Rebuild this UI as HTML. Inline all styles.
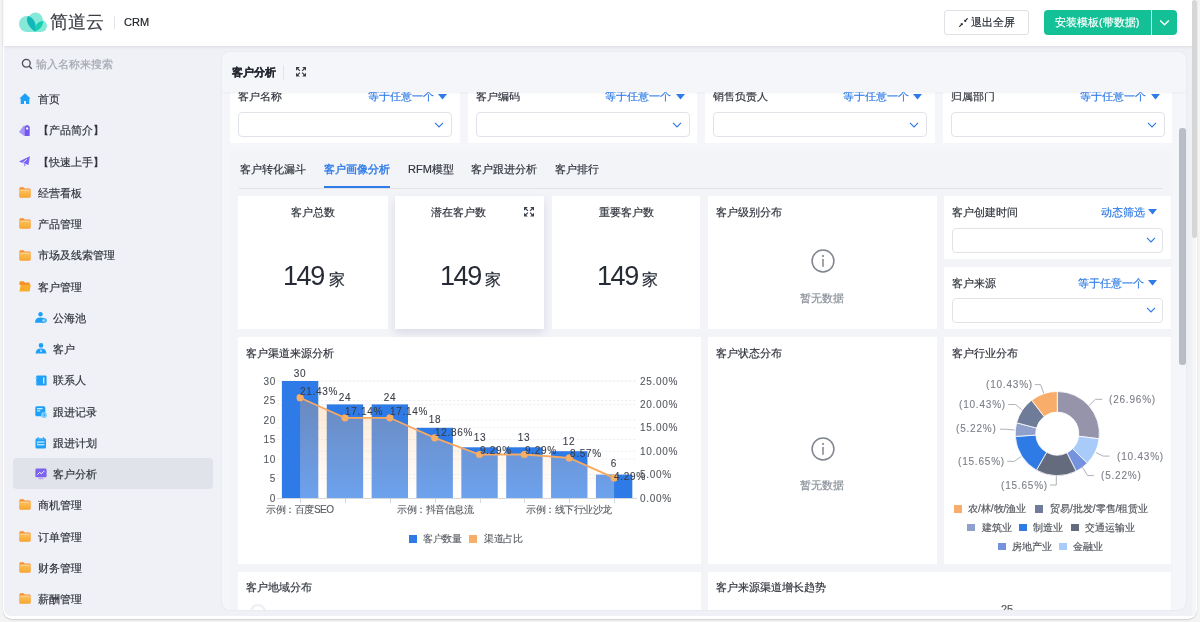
<!DOCTYPE html>
<html><head><meta charset="utf-8">
<style>
*{box-sizing:border-box;margin:0;padding:0}
html,body{width:1200px;height:622px;overflow:hidden;background:#f4f4f4;font-family:"Liberation Sans",sans-serif}
.t{will-change:transform;-webkit-text-stroke:0.18px currentColor}
.a{position:absolute}
.t{position:absolute;font-size:11px;line-height:16px;white-space:nowrap;color:#2f333c}
svg{position:absolute;overflow:visible}
</style></head><body>

<div class="a" style="left:2.5px;top:-10px;width:1194.5px;height:629px;background:#fff;border-radius:9px;box-shadow:0 1px 1.5px rgba(0,0,0,.16)"></div>
<div class="a" style="left:4px;top:30px;width:1188px;height:585.5px;background:#f0f1f6;border-radius:0 0 0 7px"></div>
<div class="a" style="left:4px;top:-5px;width:1188px;height:50.5px;background:#fff;border-radius:0 0 0 0;box-shadow:0 1px 3px rgba(30,40,60,.10)"></div>
<div class="a" style="left:1192px;top:30px;width:4px;height:585.5px;background:#f6f6f9;border-radius:0 0 6px 0"></div>
<div class="a" style="left:1192px;top:0px;width:5px;height:238px;background:#d6d6d6;border-radius:3px"></div>
<svg style="left:16px;top:9px" width="34" height="26" viewBox="0 0 34 26">
  <g fill="#86e8d9"><circle cx="11" cy="15" r="8"/><circle cx="19.5" cy="11" r="7.4"/><circle cx="25" cy="17" r="6"/><rect x="11" y="15" width="14" height="8"/></g>
  <path d="M12,7 C9.3,11.5 11.8,17.5 19,22.6 C20.8,16 19.2,9.5 12,7 Z" fill="#10b8ba"/>
  <path d="M27.2,12 C21.5,12.3 18.3,16.5 19,22.6 C24,20.5 27,17 27.2,12 Z" fill="#14cfb0"/>
</svg>
<div class="t" style="left:49.5px;top:9.0px;font-size:18px;line-height:26px;color:#3a3d44;font-weight:400;">简道云</div>
<div class="a" style="left:114px;top:16px;width:1px;height:13px;background:#e3e4e8"></div>
<div class="t" style="left:124px;top:13.5px;font-size:11px;line-height:16px;color:#20232a;font-weight:400;">CRM</div>
<div class="a" style="left:944px;top:10px;width:85px;height:25px;border:1px solid #dfe1e6;border-radius:3px;background:#fff"></div>
<svg style="left:958.5px;top:17.5px" width="9" height="9" viewBox="0 0 9 9"><path d="M8.3,0.7 L6.2,2.8 M0.7,8.3 L2.8,6.2" stroke="#1f232b" stroke-width="1.2" stroke-linecap="round"/><path d="M5.3,1.5 L5.3,3.8 L7.6,3.8 Z M3.7,5.2 L1.4,5.2 L3.7,7.5 Z" fill="#1f232b"/></svg>
<div class="t" style="left:971px;top:14.3px;font-size:11px;line-height:16px;color:#2b2f38;font-weight:400;">退出全屏</div>
<div class="a" style="left:1044px;top:10px;width:133px;height:25px;background:#14c196;border-radius:4px"></div>
<div class="a" style="left:1151px;top:10px;width:1px;height:25px;background:#c9f2e6"></div>
<div class="t" style="left:1055px;top:14.3px;font-size:11px;line-height:16px;color:#ffffff;font-weight:400;">安装模板(带数据)</div>
<svg style="left:1159px;top:18.5px" width="11" height="8" viewBox="0 0 11 8"><path d="M1.2 1.5 L5.5 5.8 L9.8 1.5" stroke="#fff" stroke-width="1.4" fill="none"/></svg>
<svg style="left:21px;top:58px" width="12" height="12" viewBox="0 0 12 12"><circle cx="5.3" cy="5.3" r="3.9" stroke="#4a4e58" stroke-width="1.3" fill="none"/><path d="M8.2 8.2 L10.8 10.8" stroke="#4a4e58" stroke-width="1.4"/></svg>
<div class="t" style="left:36px;top:55.8px;font-size:11px;line-height:16px;color:#a3a7b0;font-weight:400;">输入名称来搜索</div>
<div class="a" style="left:13px;top:458px;width:200px;height:31px;background:#e1e3ea;border-radius:4px"></div>
<div class="a" style="left:19.4px;top:93.3px"><svg width="12" height="12" viewBox="0 0 12 12"><path d="M6 0.2 L11.6 5.4 L10.3 5.4 L10.3 11 L7 11 L7 8 L5 8 L5 11 L1.7 11 L1.7 5.4 L0.4 5.4 Z" fill="#1ea0f8"/></svg></div>
<div class="t" style="left:38px;top:91.1px;font-size:11px;line-height:16px;color:#30343e;font-weight:400;">首页</div>
<div class="a" style="left:19.4px;top:124.5px"><svg width="12" height="12" viewBox="0 0 12 12"><path d="M5.4,0.6 Q4.8,0.4 4.4,1 L0.3,6.6 Q0,7.1 0.5,7.5 L4.6,10.6 L5.8,10.9 L5.8,1 Z" fill="#a896fb"/><path d="M5.6,2.3 Q5.6,1.7 6.1,1.3 L7.6,0.2 Q8.15,-0.1 8.7,0.2 L10.2,1.3 Q10.7,1.7 10.7,2.3 L10.7,10.3 Q10.7,10.9 10.1,10.9 L6.2,10.9 Q5.6,10.9 5.6,10.3 Z" fill="#7457ee"/><circle cx="8.15" cy="3.5" r="1.15" fill="#fff"/></svg></div>
<div class="t" style="left:38px;top:122.3px;font-size:11px;line-height:16px;color:#30343e;font-weight:400;">【产品简介】</div>
<div class="a" style="left:19.4px;top:155.8px"><svg width="12" height="12" viewBox="0 0 12 12"><path d="M10.9,0.2 L0,5.4 L3.2,6.7 L5.6,7.6 L9.5,9 Z" fill="#7a62f2"/><path d="M4.9,7.2 L5.1,10.7 L7,8.8 Z" fill="#a292f9"/><path d="M3.6,7 L8,3.2" stroke="#f0f1f6" stroke-width="0.9"/></svg></div>
<div class="t" style="left:38px;top:153.6px;font-size:11px;line-height:16px;color:#30343e;font-weight:400;">【快速上手】</div>
<div class="a" style="left:19.4px;top:187.0px"><svg width="12" height="11" viewBox="0 0 12 11"><defs><linearGradient id="fg" x1="0" y1="0" x2="0" y2="1"><stop offset="0" stop-color="#fbc15a"/><stop offset="1" stop-color="#f7a631"/></linearGradient></defs><path d="M0.5 1.2 Q0.5 0.3 1.4 0.3 L4.6 0.3 L5.8 1.6 L10.6 1.6 Q11.5 1.6 11.5 2.5 L11.5 9.6 Q11.5 10.5 10.6 10.5 L1.4 10.5 Q0.5 10.5 0.5 9.6 Z" fill="#f9902a"/><rect x="0.5" y="3.0" width="11" height="7.5" rx="0.9" fill="url(#fg)"/><rect x="1.5" y="2.6" width="9" height="0.8" fill="#fde9c0"/></svg></div>
<div class="t" style="left:38px;top:184.8px;font-size:11px;line-height:16px;color:#30343e;font-weight:400;">经营看板</div>
<div class="a" style="left:19.4px;top:218.3px"><svg width="12" height="11" viewBox="0 0 12 11"><defs><linearGradient id="fg" x1="0" y1="0" x2="0" y2="1"><stop offset="0" stop-color="#fbc15a"/><stop offset="1" stop-color="#f7a631"/></linearGradient></defs><path d="M0.5 1.2 Q0.5 0.3 1.4 0.3 L4.6 0.3 L5.8 1.6 L10.6 1.6 Q11.5 1.6 11.5 2.5 L11.5 9.6 Q11.5 10.5 10.6 10.5 L1.4 10.5 Q0.5 10.5 0.5 9.6 Z" fill="#f9902a"/><rect x="0.5" y="3.0" width="11" height="7.5" rx="0.9" fill="url(#fg)"/><rect x="1.5" y="2.6" width="9" height="0.8" fill="#fde9c0"/></svg></div>
<div class="t" style="left:38px;top:216.1px;font-size:11px;line-height:16px;color:#30343e;font-weight:400;">产品管理</div>
<div class="a" style="left:19.4px;top:249.5px"><svg width="12" height="11" viewBox="0 0 12 11"><defs><linearGradient id="fg" x1="0" y1="0" x2="0" y2="1"><stop offset="0" stop-color="#fbc15a"/><stop offset="1" stop-color="#f7a631"/></linearGradient></defs><path d="M0.5 1.2 Q0.5 0.3 1.4 0.3 L4.6 0.3 L5.8 1.6 L10.6 1.6 Q11.5 1.6 11.5 2.5 L11.5 9.6 Q11.5 10.5 10.6 10.5 L1.4 10.5 Q0.5 10.5 0.5 9.6 Z" fill="#f9902a"/><rect x="0.5" y="3.0" width="11" height="7.5" rx="0.9" fill="url(#fg)"/><rect x="1.5" y="2.6" width="9" height="0.8" fill="#fde9c0"/></svg></div>
<div class="t" style="left:38px;top:247.3px;font-size:11px;line-height:16px;color:#30343e;font-weight:400;">市场及线索管理</div>
<div class="a" style="left:19.4px;top:280.7px"><svg width="12" height="11" viewBox="0 0 12 11"><path d="M0.5 1.2 Q0.5 0.3 1.4 0.3 L4.6 0.3 L5.8 1.6 L10 1.6 Q10.8 1.6 10.8 2.5 L10.8 4 L0.5 4 Z" fill="#f9902a"/><path d="M1.6 4 L11.8 4 L10.6 10.4 L0.4 10.4 Z" fill="#f8ad2d"/></svg></div>
<div class="t" style="left:38px;top:278.5px;font-size:11px;line-height:16px;color:#30343e;font-weight:400;">客户管理</div>
<div class="a" style="left:35px;top:312.0px"><svg width="12" height="11" viewBox="0 0 12 11"><circle cx="5.5" cy="2.3" r="2.2" fill="#1ea0f8"/><path d="M0 10.8 Q0 5.6 5.5 5.6 Q7.5 5.6 8.6 6.3 L8.6 10.8 Z" fill="#1ea0f8"/><rect x="5.5" y="6.2" width="6.3" height="4.6" rx="2.3" fill="#1ea0f8"/><rect x="7" y="7.2" width="3.6" height="2.6" rx="1.2" fill="#8fd3ff"/></svg></div>
<div class="t" style="left:53px;top:309.8px;font-size:11px;line-height:16px;color:#30343e;font-weight:400;">公海池</div>
<div class="a" style="left:35px;top:343.2px"><svg width="12" height="11" viewBox="0 0 12 11"><circle cx="6" cy="2.4" r="2.3" fill="#1ea0f8"/><path d="M0.6 10.6 Q0.6 5.4 6 5.4 Q11.4 5.4 11.4 10.6 Z" fill="#1ea0f8"/><path d="M6 6 L6.8 8.2 L6 9 L5.2 8.2 Z" fill="#fff"/></svg></div>
<div class="t" style="left:53px;top:341.0px;font-size:11px;line-height:16px;color:#30343e;font-weight:400;">客户</div>
<div class="a" style="left:35px;top:374.5px"><svg width="12" height="11" viewBox="0 0 12 11"><rect x="1.2" y="0.4" width="10.4" height="10.2" rx="1.3" fill="#1ea0f8"/><rect x="0.2" y="2.6" width="2" height="1" fill="#8fd3ff"/><rect x="0.2" y="7.2" width="2" height="1" fill="#8fd3ff"/><rect x="8.2" y="2.4" width="1.1" height="6.2" fill="#fff"/></svg></div>
<div class="t" style="left:53px;top:372.3px;font-size:11px;line-height:16px;color:#30343e;font-weight:400;">联系人</div>
<div class="a" style="left:35px;top:405.7px"><svg width="12" height="12" viewBox="0 0 12 12"><rect x="0.3" y="0.3" width="10" height="10" rx="1.5" fill="#1ea0f8"/><rect x="2" y="2.2" width="5.5" height="1" fill="#fff"/><rect x="2" y="4.4" width="3.2" height="1" fill="#fff"/><circle cx="9" cy="9" r="2.9" fill="#7fccff"/><path d="M9 7.5 L9 9.2 L10.2 10" stroke="#1ea0f8" stroke-width="0.8" fill="none"/></svg></div>
<div class="t" style="left:53px;top:403.5px;font-size:11px;line-height:16px;color:#30343e;font-weight:400;">跟进记录</div>
<div class="a" style="left:35px;top:436.9px"><svg width="12" height="12" viewBox="0 0 12 12"><rect x="0.5" y="1.2" width="10.5" height="10.3" rx="1.5" fill="#1ea0f8"/><rect x="2.6" y="0" width="1.1" height="2.6" rx="0.5" fill="#1ea0f8"/><rect x="7.8" y="0" width="1.1" height="2.6" rx="0.5" fill="#1ea0f8"/><rect x="2.2" y="1.7" width="7.1" height="0.6" fill="#8fd3ff"/><rect x="2" y="4.5" width="7.5" height="1" fill="#fff"/><rect x="2" y="7.3" width="7.5" height="1" fill="#fff"/><rect x="2" y="4.5" width="1.3" height="3.8" fill="#8fd3ff"/></svg></div>
<div class="t" style="left:53px;top:434.7px;font-size:11px;line-height:16px;color:#30343e;font-weight:400;">跟进计划</div>
<div class="a" style="left:35px;top:468.2px"><svg width="12" height="12" viewBox="0 0 12 12"><rect x="0.4" y="0.6" width="11.2" height="8.6" rx="1.3" fill="#7b62ef"/><rect x="3.6" y="9.6" width="4.8" height="1.6" fill="#b9a6fb"/><path d="M2.4 6.6 L4.6 4.4 L6.4 5.8 L9.4 2.8" stroke="#fff" stroke-width="1" fill="none"/></svg></div>
<div class="t" style="left:53px;top:466.0px;font-size:11px;line-height:16px;color:#30343e;font-weight:400;">客户分析</div>
<div class="a" style="left:19.4px;top:499.4px"><svg width="12" height="11" viewBox="0 0 12 11"><defs><linearGradient id="fg" x1="0" y1="0" x2="0" y2="1"><stop offset="0" stop-color="#fbc15a"/><stop offset="1" stop-color="#f7a631"/></linearGradient></defs><path d="M0.5 1.2 Q0.5 0.3 1.4 0.3 L4.6 0.3 L5.8 1.6 L10.6 1.6 Q11.5 1.6 11.5 2.5 L11.5 9.6 Q11.5 10.5 10.6 10.5 L1.4 10.5 Q0.5 10.5 0.5 9.6 Z" fill="#f9902a"/><rect x="0.5" y="3.0" width="11" height="7.5" rx="0.9" fill="url(#fg)"/><rect x="1.5" y="2.6" width="9" height="0.8" fill="#fde9c0"/></svg></div>
<div class="t" style="left:38px;top:497.2px;font-size:11px;line-height:16px;color:#30343e;font-weight:400;">商机管理</div>
<div class="a" style="left:19.4px;top:530.7px"><svg width="12" height="11" viewBox="0 0 12 11"><defs><linearGradient id="fg" x1="0" y1="0" x2="0" y2="1"><stop offset="0" stop-color="#fbc15a"/><stop offset="1" stop-color="#f7a631"/></linearGradient></defs><path d="M0.5 1.2 Q0.5 0.3 1.4 0.3 L4.6 0.3 L5.8 1.6 L10.6 1.6 Q11.5 1.6 11.5 2.5 L11.5 9.6 Q11.5 10.5 10.6 10.5 L1.4 10.5 Q0.5 10.5 0.5 9.6 Z" fill="#f9902a"/><rect x="0.5" y="3.0" width="11" height="7.5" rx="0.9" fill="url(#fg)"/><rect x="1.5" y="2.6" width="9" height="0.8" fill="#fde9c0"/></svg></div>
<div class="t" style="left:38px;top:528.5px;font-size:11px;line-height:16px;color:#30343e;font-weight:400;">订单管理</div>
<div class="a" style="left:19.4px;top:561.9px"><svg width="12" height="11" viewBox="0 0 12 11"><defs><linearGradient id="fg" x1="0" y1="0" x2="0" y2="1"><stop offset="0" stop-color="#fbc15a"/><stop offset="1" stop-color="#f7a631"/></linearGradient></defs><path d="M0.5 1.2 Q0.5 0.3 1.4 0.3 L4.6 0.3 L5.8 1.6 L10.6 1.6 Q11.5 1.6 11.5 2.5 L11.5 9.6 Q11.5 10.5 10.6 10.5 L1.4 10.5 Q0.5 10.5 0.5 9.6 Z" fill="#f9902a"/><rect x="0.5" y="3.0" width="11" height="7.5" rx="0.9" fill="url(#fg)"/><rect x="1.5" y="2.6" width="9" height="0.8" fill="#fde9c0"/></svg></div>
<div class="t" style="left:38px;top:559.7px;font-size:11px;line-height:16px;color:#30343e;font-weight:400;">财务管理</div>
<div class="a" style="left:19.4px;top:593.1px"><svg width="12" height="11" viewBox="0 0 12 11"><defs><linearGradient id="fg" x1="0" y1="0" x2="0" y2="1"><stop offset="0" stop-color="#fbc15a"/><stop offset="1" stop-color="#f7a631"/></linearGradient></defs><path d="M0.5 1.2 Q0.5 0.3 1.4 0.3 L4.6 0.3 L5.8 1.6 L10.6 1.6 Q11.5 1.6 11.5 2.5 L11.5 9.6 Q11.5 10.5 10.6 10.5 L1.4 10.5 Q0.5 10.5 0.5 9.6 Z" fill="#f9902a"/><rect x="0.5" y="3.0" width="11" height="7.5" rx="0.9" fill="url(#fg)"/><rect x="1.5" y="2.6" width="9" height="0.8" fill="#fde9c0"/></svg></div>
<div class="t" style="left:38px;top:590.9px;font-size:11px;line-height:16px;color:#30343e;font-weight:400;">薪酬管理</div>
<div class="a" style="left:222px;top:52px;width:964px;height:558px;background:#f5f6fa;border-radius:8px;box-shadow:0 0 2px rgba(40,50,80,.10)"></div>
<div id="pnl" class="a" style="left:222px;top:52px;width:964px;height:558px;border-radius:8px;overflow:hidden">
<div class="a" style="left:8px;top:99px;width:942px;height:600px;background:#f3f4f8"></div>
<div class="a" style="left:8px;top:28px;width:229.5px;height:63px;background:#fff;"></div>
<div class="a" style="left:245.5px;top:28px;width:229.5px;height:63px;background:#fff;"></div>
<div class="a" style="left:483px;top:28px;width:229.5px;height:63px;background:#fff;"></div>
<div class="a" style="left:720.5px;top:28px;width:229.5px;height:63px;background:#fff;"></div>
<div class="t" style="left:16px;top:36.1px;font-size:11px;line-height:16px;color:#2f333c;font-weight:400;">客户名称</div>
<div class="t" style="left:145.5px;top:36.1px;font-size:11px;line-height:16px;color:#2f7be8;font-weight:400;">等于任意一个</div>
<svg style="left:216px;top:42px" width="9" height="6" viewBox="0 0 9 6"><path d="M0 0 L9 0 L4.5 5.5 Z" fill="#2f7be8"/></svg>
<div class="a" style="left:16px;top:60px;width:214px;height:25px;border:1px solid #e1e3e8;border-radius:4px"></div>
<svg style="left:212px;top:70px" width="10" height="6" viewBox="0 0 10 6"><path d="M1 0.8 L5 4.8 L9 0.8" stroke="#2f7be8" stroke-width="1.2" fill="none"/></svg>
<div class="t" style="left:253.5px;top:36.1px;font-size:11px;line-height:16px;color:#2f333c;font-weight:400;">客户编码</div>
<div class="t" style="left:383.0px;top:36.1px;font-size:11px;line-height:16px;color:#2f7be8;font-weight:400;">等于任意一个</div>
<svg style="left:453.5px;top:42px" width="9" height="6" viewBox="0 0 9 6"><path d="M0 0 L9 0 L4.5 5.5 Z" fill="#2f7be8"/></svg>
<div class="a" style="left:253.5px;top:60px;width:214px;height:25px;border:1px solid #e1e3e8;border-radius:4px"></div>
<svg style="left:449.5px;top:70px" width="10" height="6" viewBox="0 0 10 6"><path d="M1 0.8 L5 4.8 L9 0.8" stroke="#2f7be8" stroke-width="1.2" fill="none"/></svg>
<div class="t" style="left:491px;top:36.1px;font-size:11px;line-height:16px;color:#2f333c;font-weight:400;">销售负责人</div>
<div class="t" style="left:620.5px;top:36.1px;font-size:11px;line-height:16px;color:#2f7be8;font-weight:400;">等于任意一个</div>
<svg style="left:691px;top:42px" width="9" height="6" viewBox="0 0 9 6"><path d="M0 0 L9 0 L4.5 5.5 Z" fill="#2f7be8"/></svg>
<div class="a" style="left:491px;top:60px;width:214px;height:25px;border:1px solid #e1e3e8;border-radius:4px"></div>
<svg style="left:687px;top:70px" width="10" height="6" viewBox="0 0 10 6"><path d="M1 0.8 L5 4.8 L9 0.8" stroke="#2f7be8" stroke-width="1.2" fill="none"/></svg>
<div class="t" style="left:728.5px;top:36.1px;font-size:11px;line-height:16px;color:#2f333c;font-weight:400;">归属部门</div>
<div class="t" style="left:858.0px;top:36.1px;font-size:11px;line-height:16px;color:#2f7be8;font-weight:400;">等于任意一个</div>
<svg style="left:928.5px;top:42px" width="9" height="6" viewBox="0 0 9 6"><path d="M0 0 L9 0 L4.5 5.5 Z" fill="#2f7be8"/></svg>
<div class="a" style="left:728.5px;top:60px;width:214px;height:25px;border:1px solid #e1e3e8;border-radius:4px"></div>
<svg style="left:924.5px;top:70px" width="10" height="6" viewBox="0 0 10 6"><path d="M1 0.8 L5 4.8 L9 0.8" stroke="#2f7be8" stroke-width="1.2" fill="none"/></svg>
<div class="a" style="left:0;top:0;width:964px;height:40px;background:#f5f6fa;box-shadow:0 1px 2px rgba(200,205,220,.25)"></div>
<div class="t" style="left:10px;top:12.1px;font-size:11px;line-height:16px;color:#22262f;font-weight:700;">客户分析</div>
<div class="a" style="left:60.5px;top:12.5px;width:1px;height:15px;background:#e2e4ea"></div>
<div class="a" style="left:74.10000000000002px;top:14.5px"><svg width="10" height="9.5" viewBox="0 0 10 9.5"><g fill="#3a3f4a"><path d="M0,0 L3.8,0 L0,3.8 Z M10,0 L6.2,0 L10,3.8 Z M0,9.5 L3.8,9.5 L0,5.7 Z M10,9.5 L6.2,9.5 L10,5.7 Z"/></g><g stroke="#3a3f4a" stroke-width="1.1"><path d="M1.5,1.5 L3.9,3.9 M8.5,1.5 L6.1,3.9 M1.5,8 L3.9,5.6 M8.5,8 L6.1,5.6"/></g></svg></div>
<div class="t" style="left:18px;top:109.4px;font-size:11px;line-height:16px;color:#2f333c;font-weight:400;">客户转化漏斗</div>
<div class="t" style="left:102px;top:109.4px;font-size:11px;line-height:16px;color:#2f7be8;font-weight:400;-webkit-text-stroke:0.4px currentColor">客户画像分析</div>
<div class="t" style="left:186px;top:109.4px;font-size:11px;line-height:16px;color:#2f333c;font-weight:400;">RFM模型</div>
<div class="t" style="left:249px;top:109.4px;font-size:11px;line-height:16px;color:#2f333c;font-weight:400;">客户跟进分析</div>
<div class="t" style="left:333px;top:109.4px;font-size:11px;line-height:16px;color:#2f333c;font-weight:400;">客户排行</div>
<div class="a" style="left:17px;top:136px;width:924px;height:1px;background:#e1e3e9"></div>
<div class="a" style="left:102px;top:134px;width:66px;height:2px;background:#2f7be8"></div>
<div class="a" style="left:16px;top:144px;width:149.5px;height:133px;background:#fff;"></div>
<div class="t" style="left:16px;width:149.5px;text-align:center;top:151.8px;color:#2f333c">客户总数</div>
<div class="t" style="left:61.2px;top:209px;line-height:30px;font-size:27px;letter-spacing:-1.4px;color:#262b36;-webkit-text-stroke:0">149</div>
<div class="t" style="left:106.6px;top:218px;line-height:20px;font-size:16px;color:#262b36">家</div>
<div class="a" style="left:173px;top:144px;width:149px;height:133px;background:#fff;box-shadow:0 4px 9px rgba(60,50,120,.13);"></div>
<div class="t" style="left:173px;width:127px;text-align:center;top:151.8px;color:#2f333c">潜在客户数</div>
<div class="t" style="left:218.0px;top:209px;line-height:30px;font-size:27px;letter-spacing:-1.4px;color:#262b36;-webkit-text-stroke:0">149</div>
<div class="t" style="left:263.3px;top:218px;line-height:20px;font-size:16px;color:#262b36">家</div>
<div class="a" style="left:330px;top:144px;width:148px;height:133px;background:#fff;"></div>
<div class="t" style="left:330px;width:148px;text-align:center;top:151.8px;color:#2f333c">重要客户数</div>
<div class="t" style="left:374.5px;top:209px;line-height:30px;font-size:27px;letter-spacing:-1.4px;color:#262b36;-webkit-text-stroke:0">149</div>
<div class="t" style="left:419.8px;top:218px;line-height:20px;font-size:16px;color:#262b36">家</div>
<div class="a" style="left:301.79999999999995px;top:154.8px"><svg width="10" height="9.5" viewBox="0 0 10 9.5"><g fill="#3a3f4a"><path d="M0,0 L3.8,0 L0,3.8 Z M10,0 L6.2,0 L10,3.8 Z M0,9.5 L3.8,9.5 L0,5.7 Z M10,9.5 L6.2,9.5 L10,5.7 Z"/></g><g stroke="#3a3f4a" stroke-width="1.1"><path d="M1.5,1.5 L3.9,3.9 M8.5,1.5 L6.1,3.9 M1.5,8 L3.9,5.6 M8.5,8 L6.1,5.6"/></g></svg></div>
<div class="a" style="left:486px;top:144px;width:228.5px;height:133px;background:#fff;"></div>
<div class="t" style="left:494px;top:151.8px;font-size:11px;line-height:16px;color:#2f333c;font-weight:400;">客户级别分布</div>
<div class="a" style="left:588.5px;top:197px"><svg width="24" height="24" viewBox="0 0 24 24"><circle cx="12" cy="12" r="10.9" stroke="#80848e" stroke-width="1.5" fill="none"/><circle cx="12" cy="7" r="1.1" fill="#80848e"/><rect x="11.25" y="9.8" width="1.5" height="8.2" rx="0.7" fill="#80848e"/></svg></div>
<div class="t" style="left:486px;width:228px;text-align:center;top:237.8px;color:#8a8f99">暂无数据</div>
<div class="a" style="left:721.5px;top:144px;width:227.5px;height:63px;background:#fff;"></div>
<div class="t" style="left:730px;top:151.8px;font-size:11px;line-height:16px;color:#2f333c;font-weight:400;">客户创建时间</div>
<div class="t" style="left:879px;top:151.8px;font-size:11px;line-height:16px;color:#2f7be8;font-weight:400;">动态筛选</div>
<svg style="left:926px;top:157px" width="9" height="6" viewBox="0 0 9 6"><path d="M0 0 L9 0 L4.5 5.5 Z" fill="#2f7be8"/></svg>
<div class="a" style="left:730px;top:175.5px;width:211px;height:25px;border:1px solid #e1e3e8;border-radius:4px"></div>
<svg style="left:923.7px;top:185.2px" width="10" height="6" viewBox="0 0 10 6"><path d="M1 0.8 L5 4.8 L9 0.8" stroke="#2f7be8" stroke-width="1.2" fill="none"/></svg>
<div class="a" style="left:721.5px;top:215px;width:227.5px;height:62px;background:#fff;"></div>
<div class="t" style="left:730px;top:222.8px;font-size:11px;line-height:16px;color:#2f333c;font-weight:400;">客户来源</div>
<div class="t" style="left:856px;top:222.8px;font-size:11px;line-height:16px;color:#2f7be8;font-weight:400;">等于任意一个</div>
<svg style="left:926px;top:228px" width="9" height="6" viewBox="0 0 9 6"><path d="M0 0 L9 0 L4.5 5.5 Z" fill="#2f7be8"/></svg>
<div class="a" style="left:730px;top:245.5px;width:211px;height:25px;border:1px solid #e1e3e8;border-radius:4px"></div>
<svg style="left:923.7px;top:255.2px" width="10" height="6" viewBox="0 0 10 6"><path d="M1 0.8 L5 4.8 L9 0.8" stroke="#2f7be8" stroke-width="1.2" fill="none"/></svg>
<div class="a" style="left:16px;top:285px;width:463px;height:226.5px;background:#fff;"></div>
<div class="t" style="left:24px;top:292.8px;font-size:11px;line-height:16px;color:#2f333c;font-weight:400;">客户渠道来源分析</div>
<div class="a" style="left:486px;top:285px;width:228.5px;height:226.5px;background:#fff;"></div>
<div class="t" style="left:494px;top:292.8px;font-size:11px;line-height:16px;color:#2f333c;font-weight:400;">客户状态分布</div>
<div class="a" style="left:588.5px;top:385px"><svg width="24" height="24" viewBox="0 0 24 24"><circle cx="12" cy="12" r="10.9" stroke="#80848e" stroke-width="1.5" fill="none"/><circle cx="12" cy="7" r="1.1" fill="#80848e"/><rect x="11.25" y="9.8" width="1.5" height="8.2" rx="0.7" fill="#80848e"/></svg></div>
<div class="t" style="left:486px;width:228px;text-align:center;top:425.3px;color:#8a8f99">暂无数据</div>
<div class="a" style="left:721.5px;top:285px;width:227.5px;height:226.5px;background:#fff;"></div>
<div class="t" style="left:730px;top:292.8px;font-size:11px;line-height:16px;color:#2f333c;font-weight:400;">客户行业分布</div>
<div class="a" style="left:16px;top:519.5px;width:463px;height:48.5px;background:#fff;"></div>
<div class="t" style="left:24px;top:527.3px;font-size:11px;line-height:16px;color:#2f333c;font-weight:400;">客户地域分布</div>
<div class="a" style="left:486px;top:519.5px;width:463px;height:48.5px;background:#fff;"></div>
<div class="t" style="left:494px;top:527.3px;font-size:11px;line-height:16px;color:#2f333c;font-weight:400;">客户来源渠道增长趋势</div>
<div class="t" style="left:779px;top:549.3px;font-size:11px;line-height:16px;color:#55595f;font-weight:400;">25</div>
<svg style="left:27px;top:551px" width="20" height="10" viewBox="0 0 20 10"><path d="M2,9 A7,7 0 0 1 16,9" stroke="#edf0f5" stroke-width="2.5" fill="none"/></svg>
</div>
<svg style="left:0;top:0" width="1200" height="622" viewBox="0 0 1200 622">
<defs><linearGradient id="ag" x1="0" y1="0" x2="0" y2="1"><stop offset="0" stop-color="rgb(247,172,98)" stop-opacity="0.3"/><stop offset="1" stop-color="rgb(255,255,255)" stop-opacity="0.3"/></linearGradient></defs>
<line x1="277" y1="478.5" x2="637" y2="478.5" stroke="#eef0f3" stroke-width="1" stroke-dasharray="2.5,1.5"/>
<line x1="277" y1="459.0" x2="637" y2="459.0" stroke="#eef0f3" stroke-width="1" stroke-dasharray="2.5,1.5"/>
<line x1="277" y1="439.5" x2="637" y2="439.5" stroke="#eef0f3" stroke-width="1" stroke-dasharray="2.5,1.5"/>
<line x1="277" y1="420.0" x2="637" y2="420.0" stroke="#eef0f3" stroke-width="1" stroke-dasharray="2.5,1.5"/>
<line x1="277" y1="400.5" x2="637" y2="400.5" stroke="#eef0f3" stroke-width="1" stroke-dasharray="2.5,1.5"/>
<line x1="277" y1="381.0" x2="637" y2="381.0" stroke="#eef0f3" stroke-width="1" stroke-dasharray="2.5,1.5"/>
<line x1="277" y1="474.6" x2="637" y2="474.6" stroke="#eef0f3" stroke-width="1" stroke-dasharray="2.5,1.5"/>
<line x1="277" y1="451.2" x2="637" y2="451.2" stroke="#eef0f3" stroke-width="1" stroke-dasharray="2.5,1.5"/>
<line x1="277" y1="427.8" x2="637" y2="427.8" stroke="#eef0f3" stroke-width="1" stroke-dasharray="2.5,1.5"/>
<line x1="277" y1="404.4" x2="637" y2="404.4" stroke="#eef0f3" stroke-width="1" stroke-dasharray="2.5,1.5"/>
<line x1="277" y1="381.0" x2="637" y2="381.0" stroke="#eef0f3" stroke-width="1" stroke-dasharray="2.5,1.5"/>
<rect x="281.90" y="381.00" width="36.4" height="117.00" fill="#2e7ae6"/>
<rect x="326.76" y="404.40" width="36.4" height="93.60" fill="#2e7ae6"/>
<rect x="371.62" y="404.40" width="36.4" height="93.60" fill="#2e7ae6"/>
<rect x="416.48" y="427.80" width="36.4" height="70.20" fill="#2e7ae6"/>
<rect x="461.34" y="447.30" width="36.4" height="50.70" fill="#2e7ae6"/>
<rect x="506.20" y="447.30" width="36.4" height="50.70" fill="#2e7ae6"/>
<rect x="551.06" y="451.20" width="36.4" height="46.80" fill="#2e7ae6"/>
<rect x="595.92" y="474.60" width="36.4" height="23.40" fill="#2e7ae6"/>
<polygon points="300.10,498 300.10,397.71 344.96,417.78 389.82,417.78 434.68,437.82 479.54,454.52 524.40,454.52 569.26,457.89 614.12,477.92 614.12,498" fill="url(#ag)"/>
<polyline points="300.10,397.71 344.96,417.78 389.82,417.78 434.68,437.82 479.54,454.52 524.40,454.52 569.26,457.89 614.12,477.92" fill="none" stroke="#f5a962" stroke-width="1.8"/>
<line x1="277" y1="498.5" x2="637" y2="498.5" stroke="#d5d8de" stroke-width="1"/>
<line x1="300.5" y1="498" x2="300.5" y2="503" stroke="#d5d8de" stroke-width="1"/>
<line x1="345.5" y1="498" x2="345.5" y2="503" stroke="#d5d8de" stroke-width="1"/>
<line x1="390.5" y1="498" x2="390.5" y2="503" stroke="#d5d8de" stroke-width="1"/>
<line x1="435.5" y1="498" x2="435.5" y2="503" stroke="#d5d8de" stroke-width="1"/>
<line x1="480.5" y1="498" x2="480.5" y2="503" stroke="#d5d8de" stroke-width="1"/>
<line x1="524.5" y1="498" x2="524.5" y2="503" stroke="#d5d8de" stroke-width="1"/>
<line x1="569.5" y1="498" x2="569.5" y2="503" stroke="#d5d8de" stroke-width="1"/>
<line x1="614.5" y1="498" x2="614.5" y2="503" stroke="#d5d8de" stroke-width="1"/>
<circle cx="300.10" cy="397.71" r="3.6" fill="#f7ae66"/>
<circle cx="344.96" cy="417.78" r="3.6" fill="#f7ae66"/>
<circle cx="389.82" cy="417.78" r="3.6" fill="#f7ae66"/>
<circle cx="434.68" cy="437.82" r="3.6" fill="#f7ae66"/>
<circle cx="479.54" cy="454.52" r="3.6" fill="#f7ae66"/>
<circle cx="524.40" cy="454.52" r="3.6" fill="#f7ae66"/>
<circle cx="569.26" cy="457.89" r="3.6" fill="#f7ae66"/>
<circle cx="614.12" cy="477.92" r="3.6" fill="#f7ae66"/>
</svg>
<div class="t" style="left:245.5px;width:30px;text-align:right;top:490.5px;color:#55595f;font-size:10px;letter-spacing:0.7px;-webkit-text-stroke:0.1px currentColor">0</div>
<div class="t" style="left:245.5px;width:30px;text-align:right;top:471.0px;color:#55595f;font-size:10px;letter-spacing:0.7px;-webkit-text-stroke:0.1px currentColor">5</div>
<div class="t" style="left:245.5px;width:30px;text-align:right;top:451.5px;color:#55595f;font-size:10px;letter-spacing:0.7px;-webkit-text-stroke:0.1px currentColor">10</div>
<div class="t" style="left:245.5px;width:30px;text-align:right;top:432.0px;color:#55595f;font-size:10px;letter-spacing:0.7px;-webkit-text-stroke:0.1px currentColor">15</div>
<div class="t" style="left:245.5px;width:30px;text-align:right;top:412.5px;color:#55595f;font-size:10px;letter-spacing:0.7px;-webkit-text-stroke:0.1px currentColor">20</div>
<div class="t" style="left:245.5px;width:30px;text-align:right;top:393.0px;color:#55595f;font-size:10px;letter-spacing:0.7px;-webkit-text-stroke:0.1px currentColor">25</div>
<div class="t" style="left:245.5px;width:30px;text-align:right;top:373.5px;color:#55595f;font-size:10px;letter-spacing:0.7px;-webkit-text-stroke:0.1px currentColor">30</div>
<div class="t" style="left:640.0px;top:490.5px;color:#55595f;font-size:10px;letter-spacing:0.7px;-webkit-text-stroke:0.1px currentColor">0.00%</div>
<div class="t" style="left:640.0px;top:467.1px;color:#55595f;font-size:10px;letter-spacing:0.7px;-webkit-text-stroke:0.1px currentColor">5.00%</div>
<div class="t" style="left:640.0px;top:443.7px;color:#55595f;font-size:10px;letter-spacing:0.7px;-webkit-text-stroke:0.1px currentColor">10.00%</div>
<div class="t" style="left:640.0px;top:420.3px;color:#55595f;font-size:10px;letter-spacing:0.7px;-webkit-text-stroke:0.1px currentColor">15.00%</div>
<div class="t" style="left:640.0px;top:396.9px;color:#55595f;font-size:10px;letter-spacing:0.7px;-webkit-text-stroke:0.1px currentColor">20.00%</div>
<div class="t" style="left:640.0px;top:373.5px;color:#55595f;font-size:10px;letter-spacing:0.7px;-webkit-text-stroke:0.1px currentColor">25.00%</div>
<div class="t" style="left:285.1px;width:30px;text-align:center;top:366.1px;color:#3a3e46;font-size:10px;letter-spacing:0.7px;-webkit-text-stroke:0.1px currentColor">30</div>
<div class="t" style="left:330.0px;width:30px;text-align:center;top:389.6px;color:#3a3e46;font-size:10px;letter-spacing:0.7px;-webkit-text-stroke:0.1px currentColor">24</div>
<div class="t" style="left:374.8px;width:30px;text-align:center;top:389.6px;color:#3a3e46;font-size:10px;letter-spacing:0.7px;-webkit-text-stroke:0.1px currentColor">24</div>
<div class="t" style="left:419.7px;width:30px;text-align:center;top:411.9px;color:#3a3e46;font-size:10px;letter-spacing:0.7px;-webkit-text-stroke:0.1px currentColor">18</div>
<div class="t" style="left:464.5px;width:30px;text-align:center;top:430.3px;color:#3a3e46;font-size:10px;letter-spacing:0.7px;-webkit-text-stroke:0.1px currentColor">13</div>
<div class="t" style="left:509.4px;width:30px;text-align:center;top:430.1px;color:#3a3e46;font-size:10px;letter-spacing:0.7px;-webkit-text-stroke:0.1px currentColor">13</div>
<div class="t" style="left:554.3px;width:30px;text-align:center;top:434.0px;color:#3a3e46;font-size:10px;letter-spacing:0.7px;-webkit-text-stroke:0.1px currentColor">12</div>
<div class="t" style="left:599.1px;width:30px;text-align:center;top:455.8px;color:#3a3e46;font-size:10px;letter-spacing:0.7px;-webkit-text-stroke:0.1px currentColor">6</div>
<div class="t" style="left:300.4px;top:384.0px;color:#3a3e46;font-size:10px;letter-spacing:0.7px;-webkit-text-stroke:0.1px currentColor">21.43%</div>
<div class="t" style="left:345.3px;top:403.6px;color:#3a3e46;font-size:10px;letter-spacing:0.7px;-webkit-text-stroke:0.1px currentColor">17.14%</div>
<div class="t" style="left:390.1px;top:403.6px;color:#3a3e46;font-size:10px;letter-spacing:0.7px;-webkit-text-stroke:0.1px currentColor">17.14%</div>
<div class="t" style="left:435.0px;top:425.3px;color:#3a3e46;font-size:10px;letter-spacing:0.7px;-webkit-text-stroke:0.1px currentColor">12.86%</div>
<div class="t" style="left:479.8px;top:442.8px;color:#3a3e46;font-size:10px;letter-spacing:0.7px;-webkit-text-stroke:0.1px currentColor">9.29%</div>
<div class="t" style="left:524.7px;top:442.5px;color:#3a3e46;font-size:10px;letter-spacing:0.7px;-webkit-text-stroke:0.1px currentColor">9.29%</div>
<div class="t" style="left:569.6px;top:446.4px;color:#3a3e46;font-size:10px;letter-spacing:0.7px;-webkit-text-stroke:0.1px currentColor">8.57%</div>
<div class="t" style="left:614.4px;top:468.9px;color:#3a3e46;font-size:10px;letter-spacing:0.7px;-webkit-text-stroke:0.1px currentColor">4.29%</div>
<div class="t" style="left:240.1px;width:120px;text-align:center;top:502.4px;color:#55595f;font-size:10px;letter-spacing:-0.5px;-webkit-text-stroke:0.1px currentColor">示例：百度SEO</div>
<div class="t" style="left:374.7px;width:120px;text-align:center;top:502.4px;color:#55595f;font-size:10px;letter-spacing:-0.5px;-webkit-text-stroke:0.1px currentColor">示例：抖音信息流</div>
<div class="t" style="left:509.3px;width:120px;text-align:center;top:502.4px;color:#55595f;font-size:10px;letter-spacing:-0.5px;-webkit-text-stroke:0.1px currentColor">示例：线下行业沙龙</div>
<div class="a" style="left:409px;top:535px;width:7.5px;height:7.5px;background:#2e7ae6"></div>
<div class="t" style="left:423.0px;top:531.2px;color:#55595f;font-size:10px;letter-spacing:-0.3px;-webkit-text-stroke:0.1px currentColor">客户数量</div>
<div class="a" style="left:469px;top:535px;width:7.5px;height:7.5px;background:#f7ae66"></div>
<div class="t" style="left:484.0px;top:531.2px;color:#55595f;font-size:10px;letter-spacing:-0.3px;-webkit-text-stroke:0.1px currentColor">渠道占比</div>
<svg style="left:0;top:0" width="1200" height="622" viewBox="0 0 1200 622">
<path d="M1057.30,391.50 A42.1,42.1 0 0 1 1099.08,438.78 L1078.64,436.24 A21.5,21.5 0 0 0 1057.30,412.10 Z" fill="#9594ab" stroke="#fff" stroke-width="0.8"/>
<path d="M1099.08,438.78 A42.1,42.1 0 0 1 1087.27,463.17 L1072.60,448.70 A21.5,21.5 0 0 0 1078.64,436.24 Z" fill="#a9cbf9" stroke="#fff" stroke-width="0.8"/>
<path d="M1087.27,463.17 A42.1,42.1 0 0 1 1076.14,471.25 L1066.92,452.83 A21.5,21.5 0 0 0 1072.60,448.70 Z" fill="#7592de" stroke="#fff" stroke-width="0.8"/>
<path d="M1076.14,471.25 A42.1,42.1 0 0 1 1036.40,470.15 L1046.63,452.26 A21.5,21.5 0 0 0 1066.92,452.83 Z" fill="#646b7d" stroke="#fff" stroke-width="0.8"/>
<path d="M1036.40,470.15 A42.1,42.1 0 0 1 1015.30,436.46 L1035.85,435.06 A21.5,21.5 0 0 0 1046.63,452.26 Z" fill="#2f7be6" stroke="#fff" stroke-width="0.8"/>
<path d="M1015.30,436.46 A42.1,42.1 0 0 1 1016.61,422.78 L1036.52,428.07 A21.5,21.5 0 0 0 1035.85,435.06 Z" fill="#8fa0cc" stroke="#fff" stroke-width="0.8"/>
<path d="M1016.61,422.78 A42.1,42.1 0 0 1 1031.64,400.22 L1044.20,416.55 A21.5,21.5 0 0 0 1036.52,428.07 Z" fill="#6f7c99" stroke="#fff" stroke-width="0.8"/>
<path d="M1031.64,400.22 A42.1,42.1 0 0 1 1057.30,391.50 L1057.30,412.10 A21.5,21.5 0 0 0 1044.20,416.55 Z" fill="#f8ae6a" stroke="#fff" stroke-width="0.8"/>
<path d="M1043.8,393.4 L1040.6,384.6 L1034.8,384.6" fill="none" stroke="#aeb1b8" stroke-width="1"/>
<path d="M1089.1,405.5 L1095.4,399.3 L1102.3,399.3" fill="none" stroke="#aeb1b8" stroke-width="1"/>
<path d="M1021.8,409.7 L1015.5,404.5 L1008.2,404.5" fill="none" stroke="#aeb1b8" stroke-width="1"/>
<path d="M1014.5,430 L1005,429.2 L999.9,429.2" fill="none" stroke="#aeb1b8" stroke-width="1"/>
<path d="M1020.8,456.7 L1014.5,461.3 L1007.2,461.3" fill="none" stroke="#aeb1b8" stroke-width="1"/>
<path d="M1056.3,475.6 L1056.3,485 L1050,485" fill="none" stroke="#aeb1b8" stroke-width="1"/>
<path d="M1082.4,467.2 L1087.6,475.6 L1093.9,475.6" fill="none" stroke="#aeb1b8" stroke-width="1"/>
<path d="M1096,452.6 L1103.3,456.1 L1109.6,456.1" fill="none" stroke="#aeb1b8" stroke-width="1"/>
</svg>
<div class="t" style="left:985.5px;top:376.7px;color:#7a7e87;font-size:10px;letter-spacing:0.8px;-webkit-text-stroke:0.1px currentColor">(10.43%)</div>
<div class="t" style="left:1108.5px;top:391.7px;color:#7a7e87;font-size:10px;letter-spacing:0.8px;-webkit-text-stroke:0.1px currentColor">(26.96%)</div>
<div class="t" style="left:958.5px;top:397.2px;color:#7a7e87;font-size:10px;letter-spacing:0.8px;-webkit-text-stroke:0.1px currentColor">(10.43%)</div>
<div class="t" style="left:956.0px;top:421.2px;color:#7a7e87;font-size:10px;letter-spacing:0.8px;-webkit-text-stroke:0.1px currentColor">(5.22%)</div>
<div class="t" style="left:958.0px;top:453.7px;color:#7a7e87;font-size:10px;letter-spacing:0.8px;-webkit-text-stroke:0.1px currentColor">(15.65%)</div>
<div class="t" style="left:1001.0px;top:477.7px;color:#7a7e87;font-size:10px;letter-spacing:0.8px;-webkit-text-stroke:0.1px currentColor">(15.65%)</div>
<div class="t" style="left:1100.5px;top:467.7px;color:#7a7e87;font-size:10px;letter-spacing:0.8px;-webkit-text-stroke:0.1px currentColor">(5.22%)</div>
<div class="t" style="left:1116.5px;top:448.7px;color:#7a7e87;font-size:10px;letter-spacing:0.8px;-webkit-text-stroke:0.1px currentColor">(10.43%)</div>
<div class="a" style="left:954px;top:505.0px;width:8px;height:7.5px;background:#f8ae6a"></div>
<div class="t" style="left:968px;top:501.4px;color:#55595f;font-size:10px">农/林/牧/渔业</div>
<div class="a" style="left:1035.3px;top:505.0px;width:8px;height:7.5px;background:#6f7c99"></div>
<div class="t" style="left:1050px;top:501.4px;color:#55595f;font-size:10px">贸易/批发/零售/租赁业</div>
<div class="a" style="left:967.4px;top:523.6999999999999px;width:8px;height:7.5px;background:#8fa0cc"></div>
<div class="t" style="left:981.7px;top:520.1px;color:#55595f;font-size:10px">建筑业</div>
<div class="a" style="left:1018.8px;top:523.6999999999999px;width:8px;height:7.5px;background:#2f7be6"></div>
<div class="t" style="left:1033px;top:520.1px;color:#55595f;font-size:10px">制造业</div>
<div class="a" style="left:1071.2px;top:523.6999999999999px;width:8px;height:7.5px;background:#646b7d"></div>
<div class="t" style="left:1084.8px;top:520.1px;color:#55595f;font-size:10px">交通运输业</div>
<div class="a" style="left:997.7px;top:542.9px;width:8px;height:7.5px;background:#7592de"></div>
<div class="t" style="left:1012px;top:539.3px;color:#55595f;font-size:10px">房地产业</div>
<div class="a" style="left:1059.1px;top:542.9px;width:8px;height:7.5px;background:#a9cbf9"></div>
<div class="t" style="left:1073px;top:539.3px;color:#55595f;font-size:10px">金融业</div>
<div>
</div>
<div class="a" style="left:1179px;top:128px;width:6.5px;height:237px;background:#b9bdc6;border-radius:3px"></div>
</body></html>
